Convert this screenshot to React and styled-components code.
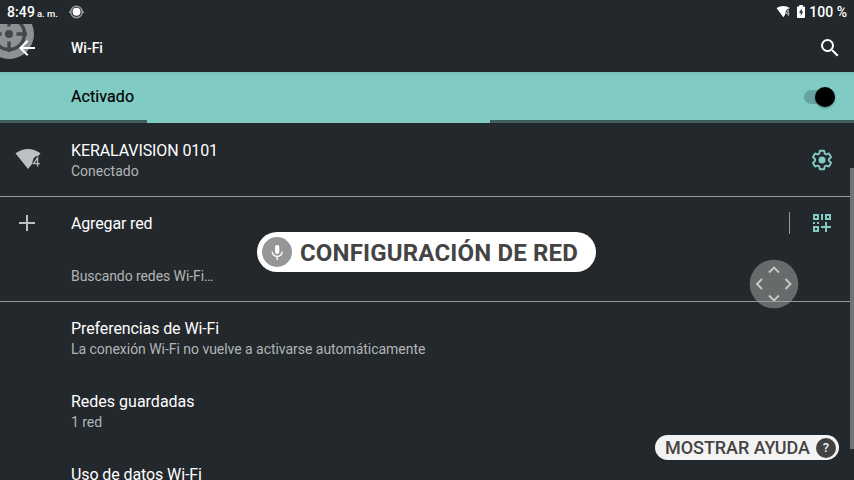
import React from "react";
import styled, { createGlobalStyle } from "styled-components";

const Global = createGlobalStyle`
  * { box-sizing: border-box; }
  body { margin: 0; background: #23282c; overflow: hidden; }
`;

const Screen = styled.div`
  position: relative;
  width: 854px;
  height: 480px;
  overflow: hidden;
  display: flex;
  flex-direction: column;
  background: #23282c;
  color: #fff;
  font-family: Roboto, "Liberation Sans", sans-serif;
  white-space: nowrap;
`;

const StatusBar = styled.header`
  display: flex;
  align-items: center;
  flex: none;
  height: 24px;
  padding: 0 7px 0 7px;
  font-size: 14px;
  line-height: 24px;
  font-weight: 500;
`;

const Clock = styled.span`
  letter-spacing: 0.1px;
`;

const Meridiem = styled.span`
  margin-left: 2px;
  padding-top: 3px;
  font-size: 9.5px;
  line-height: 20px;
`;

const StatusIcon = styled.svg`
  flex: none;
  width: ${(p) => p.$w}px;
  height: ${(p) => p.$h}px;
  margin: 0 0 ${(p) => p.$lift || 0}px ${(p) => p.$gap}px;
`;

const StatusRight = styled.div`
  display: flex;
  align-items: center;
  margin-left: auto;
`;

const Battery = styled.span`
  margin-left: 4px;
`;

const Toolbar = styled.div`
  display: flex;
  align-items: center;
  flex: none;
  height: 48px;
  padding: 0 12px 0 15px;
`;

const ToolbarTitle = styled.h1`
  flex: 1;
  margin: 0 0 0 32px;
  font-size: 14px;
  line-height: 20px;
  font-weight: 500;
`;

const Icon = styled.svg`
  display: block;
  flex: none;
  width: ${(p) => p.$size || 24}px;
  height: ${(p) => p.$size || 24}px;
`;

/* Stacks above the pointer overlay, which sits under the arrow. */
const BackIcon = styled(Icon)`
  position: relative;
  z-index: 2;
`;

const SwitchBar = styled.div`
  display: flex;
  align-items: center;
  flex: none;
  height: 48px;
  padding: 0 19.5px 0 71px;
  background: linear-gradient(#78bdb5, #80cbc4 4px);
  color: #000;
  font-size: 16px;
`;

const SwitchLabel = styled.span`
  flex: 1;
  padding-top: 1px;
  letter-spacing: 0.1px;
  -webkit-text-stroke: 0.2px #000;
`;

const SwitchTrack = styled.span`
  display: flex;
  justify-content: flex-end;
  align-items: center;
  width: 30.5px;
  height: 14px;
  margin-top: 1px;
  border-radius: 7px;
  background: #68a49f;
`;

const SwitchThumb = styled.span`
  width: 20px;
  height: 20px;
  border-radius: 50%;
  background: #000;
  box-shadow: 0 1px 2px rgba(0, 0, 0, 0.4);
`;

const Progress = styled.div`
  flex: none;
  height: 3px;
  padding-left: 147px;
  background: #415e5e;
`;

const ProgressFill = styled.div`
  width: 343px;
  height: 3px;
  background: #80cbc4;
`;

const Row = styled.div`
  display: flex;
  align-items: center;
  flex: none;
  height: ${(p) => p.$height}px;
  padding: ${(p) => p.$top || 0}px 20px 0 15px;
  border-bottom: ${(p) => (p.$divided ? "1px solid #969a9c" : "0")};
`;

const PreferenceRow = styled(Row)`
  align-items: flex-start;
  padding-top: 16px;
`;

const RowIcon = styled.div`
  flex: none;
  width: 56px;
  padding-bottom: ${(p) => p.$lift || 0}px;
`;

const RowText = styled.div`
  flex: 1;
`;

const RowTitle = styled.div`
  font-size: 16px;
  line-height: 21px;
  letter-spacing: ${(p) => p.$track || 0}px;
`;

const RowSummary = styled.div`
  color: #b2b5b6;
  font-size: 14px;
  line-height: 20px;
  letter-spacing: ${(p) => p.$track || 0}px;
`;

const Separator = styled.div`
  width: 1px;
  height: 22px;
  margin: 0 20px 1px 0;
  background: #969a9c;
`;

const TrailingIcon = styled(Icon)`
  margin-bottom: 1px;
`;

const CursorTarget = styled.svg`
  position: absolute;
  left: 0;
  top: 24px;
  width: 35px;
  height: 36px;
`;

const ScrollThumb = styled.div`
  position: absolute;
  right: 0;
  top: 168px;
  width: 4px;
  height: 281px;
  background: #717476;
`;

const VoiceLabel = styled.div`
  position: absolute;
  left: 257px;
  top: 232px;
  width: 339px;
  height: 40px;
  display: flex;
  align-items: center;
  padding-left: 5px;
  gap: 8px;
  border-radius: 20px;
  background: #fff;
  color: #444;
  font-size: 24px;
  line-height: 40px;
  font-weight: 700;
`;

const VoiceText = styled.span`
  padding-top: 2px;
  letter-spacing: 0.17px;
`;

const MovePad = styled.svg`
  position: absolute;
  left: 749px;
  top: 259px;
  width: 50px;
  height: 50px;
`;

const HelpButton = styled.div`
  position: absolute;
  left: 655px;
  top: 435px;
  width: 184px;
  height: 25px;
  display: flex;
  align-items: center;
  justify-content: space-between;
  padding: 0 3px 0 10px;
  border-radius: 13px;
  background: #f3f3f3;
  color: #444;
  font-size: 18px;
  line-height: 25px;
  font-weight: 500;
  letter-spacing: -0.05px;
`;

const HelpMark = styled.span`
  width: 20px;
  height: 20px;
  border-radius: 50%;
  background: #424242;
  color: #f3f3f3;
  font-size: 13px;
  line-height: 20px;
  text-align: center;
`;

const preferences = [
  {
    title: "Preferencias de Wi-Fi",
    summary: "La conexión Wi-Fi no vuelve a activarse automáticamente",
    track: -0.1,
  },
  { title: "Redes guardadas", summary: "1 red", track: 0 },
  { title: "Uso de datos Wi-Fi", track: -0.1 },
];

export default function App() {
  return (
    <>
      <Global />
      <Screen>
        <StatusBar>
          <Clock>8:49</Clock>
          <Meridiem>a. m.</Meridiem>
          <StatusIcon $w={15} $h={14} $gap={11} viewBox="0 0 15 14">
            <circle cx="7.5" cy="7" r="5.800" fill="none" stroke="#999d9f" strokeWidth="1.400" />
            <path d="M0 7.300h2.500M12.500 7.300H15" stroke="#999d9f" strokeWidth="1.400" />
            <circle cx="7.500" cy="6.800" r="4" fill="#fff" />
          </StatusIcon>
          <StatusRight>
            <StatusIcon $w={15} $h={13} $gap={0} $lift={1} viewBox="0 0 15 13">
              <path d="M.5 3Q7.200 -1.200 14 3L7.300 12.200Z" fill="#fff" />
              <path d="M9 10L10 5.500L12.500 3.600H15V13H10Z" fill="#23282c" />
              <path d="M12.300 11V4.800L9.900 8.700h3.700" fill="none" stroke="#b5b7b9" strokeWidth="1" />
            </StatusIcon>
            <StatusIcon $w={8} $h={13} $gap={6} $lift={2} viewBox="0 0 8 13">
              <path d="M0 2.200Q0 1.400.8 1.400H2.300V0H5.700V1.400H7.200Q8 1.400 8 2.200V12.200Q8 13 7.200 13H.8Q0 13 0 12.200Z" fill="#fff" />
              <path d="M4.700 3.400L2 7.700h1.700v3.200L6.100 6.600H4.700z" fill="#23282c" />
            </StatusIcon>
            <Battery>100 %</Battery>
          </StatusRight>
        </StatusBar>
        <CursorTarget viewBox="0 0 35 36">
          <circle cx="9" cy="10" r="25" fill="#8e9193" />
          <circle cx="9" cy="10" r="15.500" fill="none" stroke="#444749" strokeWidth="3.400" />
          <circle cx="9" cy="10" r="4" fill="#444749" />
          <path d="M9 -9V2.500M9 17.500V28M-9 10H1.500M16.500 10H27" stroke="#444749" strokeWidth="3.400" />
        </CursorTarget>
        <Toolbar>
          <BackIcon viewBox="0 0 24 24">
            <path d="M20 11H7.830l5.590-5.590L12 4l-8 8 8 8 1.410-1.410L7.830 13H20v-2z" fill="#fff" />
          </BackIcon>
          <ToolbarTitle>Wi-Fi</ToolbarTitle>
          <Icon viewBox="0 0 24 24">
            <path d="M15.500 14h-.79l-.28-.27A6.471 6.471 0 0 0 16 9.500 6.500 6.500 0 1 0 9.500 16c1.610 0 3.090-.59 4.230-1.570l.27.28v.79l5 4.990L20.490 19l-4.990-5zm-6 0C7.010 14 5 11.990 5 9.500S7.010 5 9.500 5 14 7.010 14 9.500 11.990 14 9.500 14z" fill="#fff" />
          </Icon>
        </Toolbar>
        <SwitchBar>
          <SwitchLabel>Activado</SwitchLabel>
          <SwitchTrack>
            <SwitchThumb />
          </SwitchTrack>
        </SwitchBar>
        <Progress>
          <ProgressFill />
        </Progress>
        <Row $height={74} $top={1} $divided>
          <RowIcon>
            <Icon $size={26} viewBox="0 0 26 26">
              <path d="M.5 6.300Q13 -2.300 25.500 6.300L23.800 8.400Q17.600 8.800 17.300 16.700L13 22Z" fill="#bdbfc0" />
              <path d="M22.600 19.500V10.600L18.600 16.700h6.200" fill="none" stroke="#bdbfc0" strokeWidth="1.300" />
            </Icon>
          </RowIcon>
          <RowText>
            <RowTitle $track={-0.1}>KERALAVISION 0101</RowTitle>
            <RowSummary>Conectado</RowSummary>
          </RowText>
          <TrailingIcon viewBox="0 0 24 24">
            <path transform="translate(12 12) scale(.93) translate(-12 -12)" d="M19.430 12.980c.04-.32.07-.64.07-.98s-.03-.66-.07-.98l2.110-1.650c.19-.15.24-.42.12-.64l-2-3.460c-.12-.22-.38-.31-.61-.22l-2.490 1c-.52-.4-1.080-.73-1.690-.98l-.38-2.650C14.460 2.180 14.250 2 14 2h-4c-.25 0-.46.18-.49.42l-.38 2.650c-.61.25-1.170.59-1.690.98l-2.490-1c-.23-.09-.49 0-.61.22l-2 3.460c-.13.22-.07.49.12.64l2.110 1.650c-.04.32-.07.65-.07.98s.03.66.07.98l-2.110 1.650c-.19.15-.24.42-.12.64l2 3.460c.12.22.38.31.61.22l2.490-1c.52.4 1.080.73 1.690.98l.38 2.650c.03.24.24.42.49.42h4c.25 0 .46-.18.49-.42l.38-2.650c.61-.25 1.170-.59 1.690-.98l2.490 1c.23.09.49 0 .61-.22l2-3.460c.12-.22.07-.49-.12-.64z" fill="none" stroke="#80cbc4" strokeWidth="2" strokeLinejoin="round" />
            <circle cx="12" cy="12" r="3.500" fill="#80cbc4" />
          </TrailingIcon>
        </Row>
        <Row $height={53}>
          <RowIcon $lift={1}>
            <Icon viewBox="0 0 24 24">
              <path d="M12 4V20M4 12H20" stroke="#bdbfc0" strokeWidth="2" />
            </Icon>
          </RowIcon>
          <RowText>
            <RowTitle $track={-0.15}>Agregar red</RowTitle>
          </RowText>
          <Separator />
          <TrailingIcon viewBox="0 0 24 24">
            <path d="M4 4h4v4H4zM16 4h4v4h-4zM4 16h4v4H4z" fill="none" stroke="#80cbc4" strokeWidth="2" />
            <path d="M11 3h2v6h-2zM3 11h2v2H3zM7 11h2v2H7zM15 11h2v4h4v2h-4v4h-2v-4h-4v-2h4z" fill="#80cbc4" />
          </TrailingIcon>
        </Row>
        <Row $height={52} $divided>
          <RowIcon />
          <RowText>
            <RowSummary $track={-0.08}>Buscando redes Wi-Fi…</RowSummary>
          </RowText>
        </Row>
        {preferences.map((p) => (
          <PreferenceRow key={p.title} $height={73}>
            <RowIcon />
            <RowText>
              <RowTitle $track={p.track}>{p.title}</RowTitle>
              {p.summary && <RowSummary $track={-0.035}>{p.summary}</RowSummary>}
            </RowText>
          </PreferenceRow>
        ))}
        <ScrollThumb />
        <VoiceLabel>
          <Icon $size={30} viewBox="0 0 30 30">
            <circle cx="15" cy="15" r="15" fill="#969696" />
            <rect x="13" y="8" width="4.300" height="9" rx="2.100" fill="#fff" />
            <path d="M10.200 14.500a5 5 0 0 0 10 0M15.200 19.500V23" fill="none" stroke="#fff" strokeWidth="1.400" />
          </Icon>
          <VoiceText>CONFIGURACIÓN DE RED</VoiceText>
        </VoiceLabel>
        <MovePad viewBox="0 0 50 50">
          <circle cx="25" cy="25" r="24.300" fill="#a0a0a0" fillOpacity=".55" />
          <path d="M20 13.500l5-5 5 5M20 36.500l5 5 5-5M13 20l-5 5 5 5M36.500 20l5 5-5 5" fill="none" stroke="#c8c8c8" strokeWidth="1.900" />
        </MovePad>
        <HelpButton>
          <span>MOSTRAR AYUDA</span>
          <HelpMark>?</HelpMark>
        </HelpButton>
      </Screen>
    </>
  );
}
